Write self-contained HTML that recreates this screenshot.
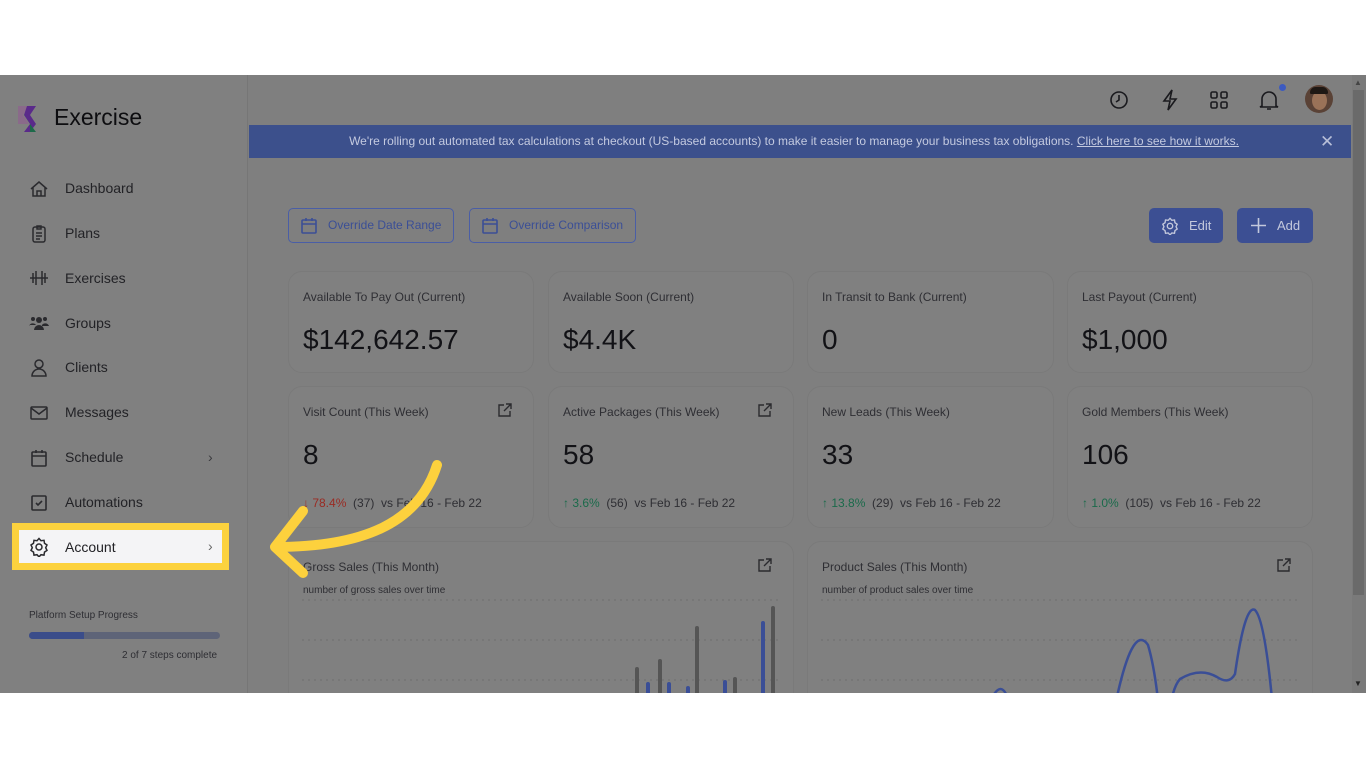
<!DOCTYPE html>
<html><head><meta charset="utf-8"><style>
*{margin:0;padding:0;box-sizing:border-box}
body{width:1366px;height:768px;background:#fff;position:relative;overflow:hidden;font-family:"Liberation Sans",sans-serif}
.app{position:absolute;left:0;top:75px;width:1366px;height:618px;background:#7f7f7f;overflow:hidden}
.side{position:absolute;left:0;top:0;width:248px;height:618px;background:#808080;border-right:1px solid #767676}
.abs{position:absolute}
.nav{position:absolute;left:65px;font-size:14px;color:#222226}
.ico{position:absolute;left:29px;width:20px;height:20px}
.card{position:absolute;border:1px solid #7a7a7a;border-radius:14px;background:#808080}
.ct{position:absolute;left:14px;top:18px;font-size:12px;color:#2e2e33}
.cv{position:absolute;left:14px;font-size:28px;color:#121216}
.cs{position:absolute;left:14px;font-size:12px;color:#2e2e33;white-space:nowrap}
.btn{position:absolute;top:133px;height:35px;border:1px solid #4a5ea6;border-radius:5px;color:#3b4f96;font-size:12px;line-height:33px}
.bf{position:absolute;top:133px;height:35px;background:#3c4f93;border-radius:5px;color:#c3c8dc;font-size:13px;line-height:35px}
.ext{position:absolute;width:14px;height:14px}
</style></head><body>
<div class="app">
<div class="side">
 <svg class="abs" style="left:17px;top:29px" width="28" height="28" viewBox="0 0 28 28"><path d="M1 2h11l-6 9 6 9H1z" fill="#8a6a8a"/><path d="M10 2h9l-6 9 6 9-6 8H7l6-8-6-9z" fill="#5a2a8a"/><path d="M13 20l6 8h-6z" fill="#1d6a4a"/></svg>
 <div class="abs" style="left:54px;top:29px;font-size:23px;color:#0d0d10">Exercise</div>
 <div class="nav" style="top:105px">Dashboard</div>
 <div class="nav" style="top:150px">Plans</div>
 <div class="nav" style="top:195px">Exercises</div>
 <div class="nav" style="top:240px">Groups</div>
 <div class="nav" style="top:284px">Clients</div>
 <div class="nav" style="top:329px">Messages</div>
 <div class="nav" style="top:374px">Schedule</div>
 <div class="nav" style="top:419px">Automations</div>
 <svg class="ico" style="top:104px" viewBox="0 0 20 20" fill="none" stroke="#2a2a2e" stroke-width="1.5"><path d="M2 10L10 3l8 7M4 8v9h12V8M8 17v-5h4v5"/></svg>
 <svg class="ico" style="top:149px" viewBox="0 0 20 20" fill="none" stroke="#2a2a2e" stroke-width="1.5"><rect x="4" y="3" width="12" height="15" rx="2"/><path d="M8 2h4v3H8zM7 9h6M7 12h6M7 15h4"/></svg>
 <svg class="ico" style="top:193px" viewBox="0 0 20 20" fill="none" stroke="#2a2a2e" stroke-width="1.5"><path d="M1 10h18M4 5v10M7 3v14M13 3v14M16 5v10"/></svg>
 <svg class="ico" style="top:238px" viewBox="0 0 20 20" fill="#2a2a2e"><circle cx="10" cy="7" r="3"/><circle cx="4" cy="6" r="2"/><circle cx="16" cy="6" r="2"/><path d="M5 17a5 5 0 0110 0zM0 13a4 4 0 017-1H0zM13 12a4 4 0 017 1h-7z"/></svg>
 <svg class="ico" style="top:283px" viewBox="0 0 20 20" fill="none" stroke="#2a2a2e" stroke-width="1.5"><circle cx="10" cy="6" r="4"/><path d="M3 18a7 7 0 0114 0z"/></svg>
 <svg class="ico" style="top:328px" viewBox="0 0 20 20" fill="none" stroke="#2a2a2e" stroke-width="1.5"><rect x="2" y="4" width="16" height="12" rx="1"/><path d="M2 5l8 6 8-6"/></svg>
 <svg class="ico" style="top:373px" viewBox="0 0 20 20" fill="none" stroke="#2a2a2e" stroke-width="1.6"><rect x="3" y="4" width="14" height="14" rx="1"/><path d="M3 8h14M7 2v3M13 2v3"/></svg>
 <svg class="ico" style="top:418px" viewBox="0 0 20 20" fill="none" stroke="#2a2a2e" stroke-width="1.6"><rect x="3" y="3" width="14" height="14" rx="1"/><path d="M7 10l2 2 4-4"/></svg>
 <div class="abs" style="left:208px;top:374px;font-size:14px;color:#3a3a3e">›</div>
 <div class="abs" style="left:12px;top:448px;width:217px;height:47px;background:#fcd23e"></div>
 <div class="abs" style="left:19px;top:455px;width:203px;height:33px;background:#f4f4f6"></div>
 <svg class="ico" style="top:462px" viewBox="0 0 20 20" fill="none" stroke="#2a2a2e" stroke-width="1.5"><circle cx="10" cy="10" r="3"/><path d="M10 1.5l2 2.2 3-.4.5 3 2.5 1.7-1.3 2.7 1.3 2.7-2.5 1.7-.5 3-3-.4-2 2.2-2-2.2-3 .4-.5-3L2 13.4l1.3-2.7L2 8l2.5-1.7.5-3 3 .4z"/></svg>
 <div class="nav" style="top:464px">Account</div>
 <div class="abs" style="left:208px;top:463px;font-size:14px;color:#666">›</div>
 <div class="abs" style="left:29px;top:535px;font-size:10px;color:#2e2e33">Platform Setup Progress</div>
 <div class="abs" style="left:29px;top:557px;width:191px;height:7px;border-radius:4px;background:#5e6478"></div>
 <div class="abs" style="left:29px;top:557px;width:55px;height:7px;border-radius:4px 0 0 4px;background:#3b4d8a"></div>
 <div class="abs" style="left:122px;top:575px;font-size:10px;color:#2e2e33">2 of 7 steps complete</div>
</div>
<svg class="abs" style="left:1109px;top:15px" width="20" height="20" viewBox="0 0 20 20" fill="none" stroke="#1a1a1e" stroke-width="1.6"><circle cx="10" cy="10" r="8"/><path d="M10 5v5l-3 2"/></svg>
<svg class="abs" style="left:1160px;top:14px" width="20" height="22" viewBox="0 0 20 22" fill="none" stroke="#1a1a1e" stroke-width="1.6"><path d="M12 1L4 12h6l-2 9 8-11h-6z"/></svg>
<svg class="abs" style="left:1210px;top:16px" width="18" height="18" viewBox="0 0 18 18" fill="none" stroke="#1a1a1e" stroke-width="1.6"><rect x="1" y="1" width="6" height="6" rx="1.5"/><rect x="11" y="1" width="6" height="6" rx="1.5"/><rect x="1" y="11" width="6" height="6" rx="1.5"/><rect x="11" y="11" width="6" height="6" rx="1.5"/></svg>
<svg class="abs" style="left:1258px;top:13px" width="22" height="24" viewBox="0 0 22 24" fill="none" stroke="#1a1a1e" stroke-width="1.6"><path d="M4 18V11a7 7 0 0114 0v7l2 1H2zM9 21h4"/></svg>
<div class="abs" style="left:1279px;top:9px;width:7px;height:7px;border-radius:50%;background:#3c5ac0"></div>
<div class="abs" style="left:1305px;top:10px;width:28px;height:28px;border-radius:50%;background:#5a4236;overflow:hidden"><div style="position:absolute;left:7px;top:6px;width:15px;height:19px;border-radius:50%;background:#9a7258"></div><div style="position:absolute;left:5px;top:2px;width:18px;height:7px;border-radius:8px 8px 2px 2px;background:#1e1814"></div></div>
<div class="abs" style="left:1352px;top:0;width:14px;height:618px;background:#7a7a7a"></div>
<div class="abs" style="left:1353px;top:15px;width:11px;height:505px;background:#6a6a6a"></div>
<div class="abs" style="left:1354px;top:3px;font-size:8px;color:#444">▲</div>
<div class="abs" style="left:1354px;top:604px;font-size:8px;color:#222">▼</div>
<div class="abs" style="left:249px;top:50px;width:1102px;height:33px;background:#3c508c;color:#c4cae0;font-size:12px;line-height:33px;text-align:center;padding-right:12px">We're rolling out automated tax calculations at checkout (US-based accounts) to make it easier to manage your business tax obligations. <u>Click here to see how it works.</u></div>
<div class="abs" style="left:1320px;top:57px;font-size:17px;color:#b8bfd8">✕</div>
<div class="btn" style="left:288px;width:166px;padding-left:39px">Override Date Range</div>
<div class="btn" style="left:469px;width:167px;padding-left:39px">Override Comparison</div>
<svg class="abs" style="left:301px;top:142px" width="16" height="17" viewBox="0 0 16 17" fill="none" stroke="#3b4f96" stroke-width="1.6"><rect x="1" y="3" width="14" height="13" rx="1"/><path d="M1 7h14M5 1v3M11 1v3"/></svg>
<svg class="abs" style="left:482px;top:142px" width="16" height="17" viewBox="0 0 16 17" fill="none" stroke="#3b4f96" stroke-width="1.6"><rect x="1" y="3" width="14" height="13" rx="1"/><path d="M1 7h14M5 1v3M11 1v3"/></svg>
<div class="bf" style="left:1149px;width:74px;padding-left:40px">Edit</div>
<svg class="abs" style="left:1161px;top:142px" width="18" height="18" viewBox="0 0 20 20" fill="none" stroke="#c3c8dc" stroke-width="1.5"><circle cx="10" cy="10" r="3"/><path d="M10 1.5l2 2.2 3-.4.5 3 2.5 1.7-1.3 2.7 1.3 2.7-2.5 1.7-.5 3-3-.4-2 2.2-2-2.2-3 .4-.5-3L2 13.4l1.3-2.7L2 8l2.5-1.7.5-3 3 .4z"/></svg>
<div class="bf" style="left:1237px;width:76px;padding-left:40px">Add</div>
<svg class="abs" style="left:1251px;top:143px" width="15" height="15" viewBox="0 0 15 15" stroke="#c3c8dc" stroke-width="1.6"><path d="M7.5 0v15M0 7.5h15"/></svg>
<div class="card" style="left:288px;top:196px;width:246px;height:102px"><div class="ct">Available To Pay Out (Current)</div><div class="cv" style="top:52px">$142,642.57</div></div>
<div class="card" style="left:548px;top:196px;width:246px;height:102px"><div class="ct">Available Soon (Current)</div><div class="cv" style="top:52px">$4.4K</div></div>
<div class="card" style="left:807px;top:196px;width:247px;height:102px"><div class="ct">In Transit to Bank (Current)</div><div class="cv" style="top:52px">0</div></div>
<div class="card" style="left:1067px;top:196px;width:246px;height:102px"><div class="ct">Last Payout (Current)</div><div class="cv" style="top:52px">$1,000</div></div>
<div class="card" style="left:288px;top:311px;width:246px;height:142px"><div class="ct">Visit Count (This Week)</div><div class="cv" style="top:52px">8</div><div class="cs" style="top:109px"><span style="color:#9a2a22">↓ 78.4%</span>&nbsp; (37)&nbsp; vs Feb 16 - Feb 22</div></div>
<div class="card" style="left:548px;top:311px;width:246px;height:142px"><div class="ct">Active Packages (This Week)</div><div class="cv" style="top:52px">58</div><div class="cs" style="top:109px"><span style="color:#1a6a4a">↑ 3.6%</span>&nbsp; (56)&nbsp; vs Feb 16 - Feb 22</div></div>
<div class="card" style="left:807px;top:311px;width:247px;height:142px"><div class="ct">New Leads (This Week)</div><div class="cv" style="top:52px">33</div><div class="cs" style="top:109px"><span style="color:#1a6a4a">↑ 13.8%</span>&nbsp; (29)&nbsp; vs Feb 16 - Feb 22</div></div>
<div class="card" style="left:1067px;top:311px;width:246px;height:142px"><div class="ct">Gold Members (This Week)</div><div class="cv" style="top:52px">106</div><div class="cs" style="top:109px"><span style="color:#1a6a4a">↑ 1.0%</span>&nbsp; (105)&nbsp; vs Feb 16 - Feb 22</div></div>
<div class="card" style="left:288px;top:466px;width:506px;height:180px"><div class="ct">Gross Sales (This Month)</div><div class="abs" style="left:14px;top:43px;font-size:10px;color:#2e2e33">number of gross sales over time</div></div>
<div class="card" style="left:807px;top:466px;width:506px;height:180px"><div class="ct">Product Sales (This Month)</div><div class="abs" style="left:14px;top:43px;font-size:10px;color:#2e2e33">number of product sales over time</div></div>
<svg class="abs" style="left:288px;top:466px" width="1030" height="160" fill="none">
 <g stroke="#6e6e6e" stroke-dasharray="2 4"><path d="M14 59h480M14 99h480M14 139h480M533 59h480M533 99h480M533 139h480"/></g>
 <g stroke-linecap="round" stroke-width="4"><path d="M349 206V128M372 206V120M409 206V87M447 206V138M485 206V67" stroke="#555"/><path d="M360 206V143M381 206V143M400 206V147M437 206V141M475 206V82" stroke="#3a4e96"/></g>
 <path d="M705 155q8-14 14 0M826 170q18-90 34-66q6 20 10 55M881 175q3-28 11-37q20-12 37-2q12 8 18-3q10-70 20-64q10 10 18 100" stroke="#3a4e96" stroke-width="2.5"/>
</svg>
<svg class="ext" style="left:498px;top:328px" viewBox="0 0 14 14" fill="none" stroke="#2a2a2e" stroke-width="1.4"><path d="M6 2H1v11h11V8M8 1h5v5M13 1L6 8"/></svg>
<svg class="ext" style="left:758px;top:328px" viewBox="0 0 14 14" fill="none" stroke="#2a2a2e" stroke-width="1.4"><path d="M6 2H1v11h11V8M8 1h5v5M13 1L6 8"/></svg>
<svg class="ext" style="left:758px;top:483px" viewBox="0 0 14 14" fill="none" stroke="#2a2a2e" stroke-width="1.4"><path d="M6 2H1v11h11V8M8 1h5v5M13 1L6 8"/></svg>
<svg class="ext" style="left:1277px;top:483px" viewBox="0 0 14 14" fill="none" stroke="#2a2a2e" stroke-width="1.4"><path d="M6 2H1v11h11V8M8 1h5v5M13 1L6 8"/></svg>
<svg class="abs" style="left:0;top:0" width="1366" height="618" fill="none"><path d="M437 390C418 450 360 472 275 472M303 436L275 472L303 498" stroke="#fdd13d" stroke-width="10" stroke-linecap="round" stroke-linejoin="round"/></svg>
</div>
</body></html>
